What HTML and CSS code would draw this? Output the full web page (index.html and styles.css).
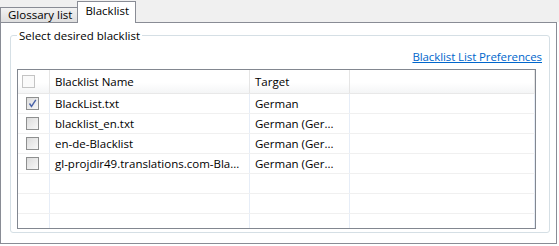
FILE: index.html
```html
<!DOCTYPE html>
<html lang="en">
<link rel="stylesheet" href="styles.css">

<head>
    <meta charset="UTF-8" />
    <title>Blacklist</title>
</head>

<body>
    <div class="tab-strip">
        <div class="tab">Glossary list</div>
        <div class="tab active">Blacklist</div>
    </div>
    <div class="tab-panel">
        <fieldset class="group">
            <legend>Select desired blacklist</legend>
            <div class="link-row">
                <a href="#" class="pref-link">Blacklist List Preferences</a>
            </div>
            <div class="grid-table">
                <div class="row head">
                    <div class="cell check"><span class="box head-box"></span></div>
                    <div class="cell">Blacklist Name</div>
                    <div class="cell">Target</div>
                    <div class="cell"></div>
                </div>
                <div class="row">
                    <div class="cell check">
                        <span class="box">
                            <svg width="11" height="11" viewBox="0 0 11 11">
                                <path d="M2.5 5.5 L4.5 8.5 L8.8 1.8" fill="none" stroke="#4a63a8" stroke-width="1.4" />
                            </svg>
                        </span>
                    </div>
                    <div class="cell">BlackList.txt</div>
                    <div class="cell">German</div>
                    <div class="cell"></div>
                </div>
                <div class="row">
                    <div class="cell check"><span class="box"></span></div>
                    <div class="cell">blacklist_en.txt</div>
                    <div class="cell">German (Ger...</div>
                    <div class="cell"></div>
                </div>
                <div class="row">
                    <div class="cell check"><span class="box"></span></div>
                    <div class="cell">en-de-Blacklist</div>
                    <div class="cell">German (Ger...</div>
                    <div class="cell"></div>
                </div>
                <div class="row">
                    <div class="cell check"><span class="box"></span></div>
                    <div class="cell">gl-projdir49.translations.com-Bla...</div>
                    <div class="cell">German (Ger...</div>
                    <div class="cell"></div>
                </div>
                <div class="row">
                    <div class="cell check"></div>
                    <div class="cell"></div>
                    <div class="cell"></div>
                    <div class="cell"></div>
                </div>
                <div class="row">
                    <div class="cell check"></div>
                    <div class="cell"></div>
                    <div class="cell"></div>
                    <div class="cell"></div>
                </div>
                <div class="row">
                    <div class="cell check"></div>
                    <div class="cell"></div>
                    <div class="cell"></div>
                    <div class="cell"></div>
                </div>
            </div>
        </fieldset>
    </div>
</body>

</html>
```

FILE: styles.css
```css
* {
    margin: 0;
    padding: 0;
    box-sizing: border-box;
}

body {
    width: 559px;
    height: 246px;
    background-color: #ffffff;
    font-family: "Open Sans", "Noto Sans", sans-serif;
    font-size: 11.5px;
    color: #000000;
    overflow: hidden;
}

.tab-strip {
    display: flex;
    align-items: flex-end;
    height: 22px;
    background-color: #f0f0f0;
}

.tab {
    height: 15px;
    padding: 0 5px 0 7px;
    line-height: 13px;
    border: 1px solid #898c95;
    border-bottom: none;
    background: linear-gradient(#f2f2f2, #dedede);
}

.tab.active {
    position: relative;
    z-index: 1;
    height: 22px;
    margin-bottom: -1px;
    margin-left: -1px;
    padding: 0 6px 0 7px;
    line-height: 18px;
    background: #ffffff;
}

.tab-panel {
    width: 557px;
    height: 222px;
    border: 1px solid #898c95;
    background-color: #ffffff;
    padding: 5px 0 0 9px;
}

.group {
    width: 540px;
    height: 205px;
    border: 1px solid #d5dfe5;
    border-radius: 3px;
    padding: 0 13px 0 6px;
}

.group legend {
    margin-left: 0;
    padding: 0 2px;
    line-height: 15px;
}

.link-row {
    display: flex;
    justify-content: flex-end;
    height: 26px;
    padding: 6px 0 0 0;
    margin-right: -6px;
}

.pref-link {
    color: #0066cc;
    text-decoration: underline;
    line-height: 16px;
    letter-spacing: -0.1px;
}

.grid-table {
    width: 519px;
    height: 160px;
    border: 1px solid #828790;
    overflow: hidden;
}

.row {
    display: grid;
    grid-template-columns: 32px 200px 100px 1fr;
    height: 20px;
    border-bottom: 1px solid #f0f0f0;
}

.row.head {
    height: 24px;
    border-bottom: 1px solid #e8e8e8;
    background: linear-gradient(#ffffff 55%, #f4f5f6);
}

.cell {
    border-right: 1px solid #e6edf7;
    padding-left: 5px;
    line-height: 19px;
    white-space: nowrap;
    overflow: hidden;
}

.row.head .cell {
    border-right: 1px solid #e5e5e5;
    line-height: 23px;
}

.cell.check {
    display: flex;
    align-items: center;
    padding-left: 8px;
}

.row.head .cell.check {
    padding-left: 4px;
}

.box {
    display: flex;
    align-items: center;
    justify-content: center;
    width: 13px;
    height: 13px;
    border: 1px solid #8e8f8f;
    background: linear-gradient(135deg, #dcdcdc, #f8f8f8);
}

.box.head-box {
    border-color: #c4c4c4;
    background: #fafafa;
}
```
